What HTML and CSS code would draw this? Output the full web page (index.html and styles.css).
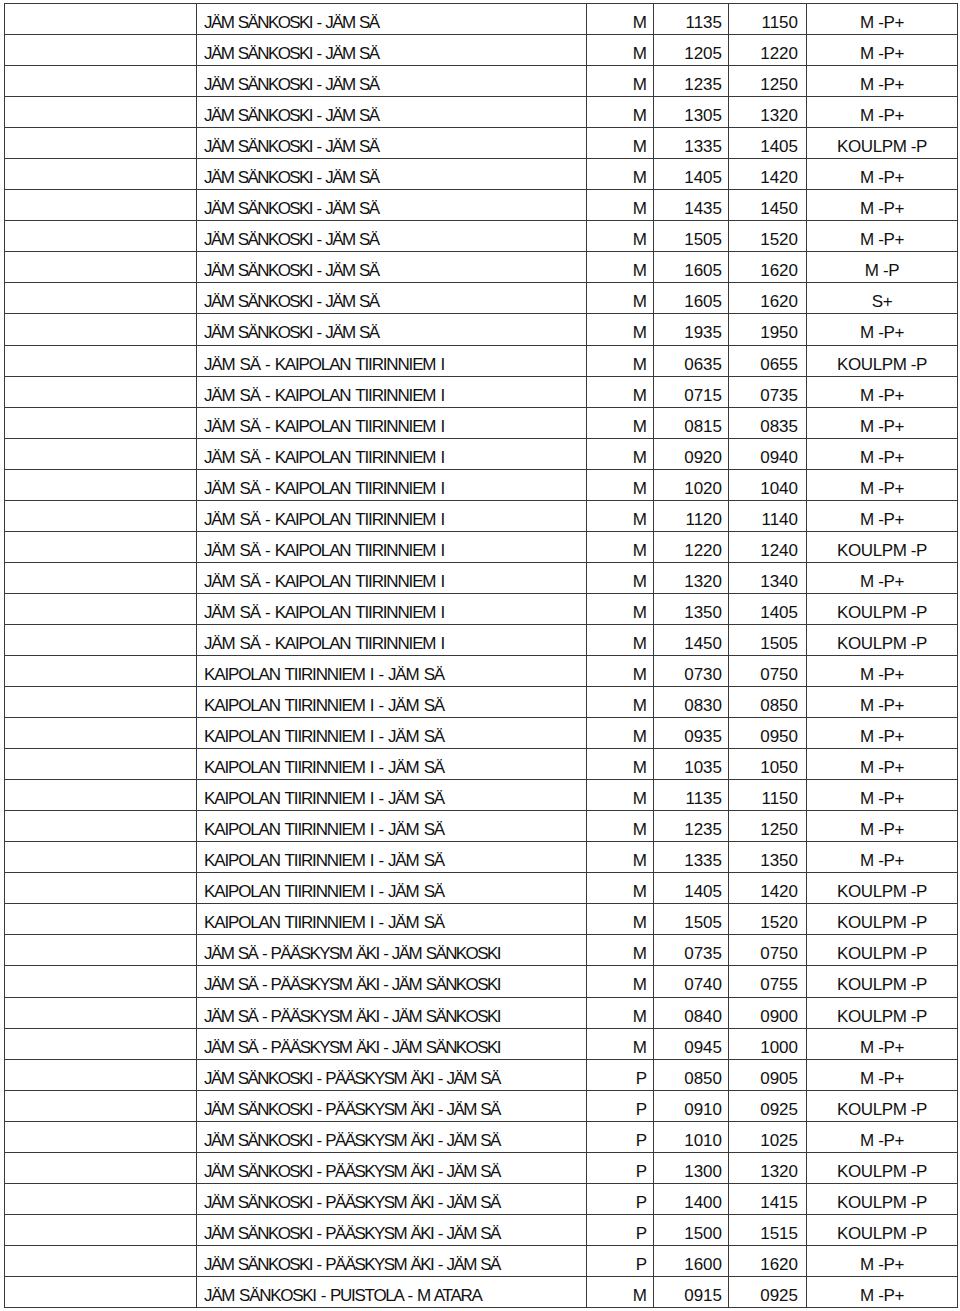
FILE: index.html
```html
<!DOCTYPE html>
<html lang="fi">
<head>
<meta charset="utf-8">
<title>Aikataulu</title>
<link rel="stylesheet" href="styles.css">
</head>
<body>
<table class="timetable">
<colgroup>
<col class="c-blank"><col class="c-route"><col class="c-day"><col class="c-dep"><col class="c-arr"><col class="c-type">
</colgroup>
<tbody>
<tr><td></td><td class="route">JÄM SÄNKOSKI - JÄM SÄ</td><td class="day">M</td><td class="dep">1135</td><td class="arr">1150</td><td class="type">M -P+</td></tr>
<tr><td></td><td class="route">JÄM SÄNKOSKI - JÄM SÄ</td><td class="day">M</td><td class="dep">1205</td><td class="arr">1220</td><td class="type">M -P+</td></tr>
<tr><td></td><td class="route">JÄM SÄNKOSKI - JÄM SÄ</td><td class="day">M</td><td class="dep">1235</td><td class="arr">1250</td><td class="type">M -P+</td></tr>
<tr><td></td><td class="route">JÄM SÄNKOSKI - JÄM SÄ</td><td class="day">M</td><td class="dep">1305</td><td class="arr">1320</td><td class="type">M -P+</td></tr>
<tr><td></td><td class="route">JÄM SÄNKOSKI - JÄM SÄ</td><td class="day">M</td><td class="dep">1335</td><td class="arr">1405</td><td class="type">KOULPM -P</td></tr>
<tr><td></td><td class="route">JÄM SÄNKOSKI - JÄM SÄ</td><td class="day">M</td><td class="dep">1405</td><td class="arr">1420</td><td class="type">M -P+</td></tr>
<tr><td></td><td class="route">JÄM SÄNKOSKI - JÄM SÄ</td><td class="day">M</td><td class="dep">1435</td><td class="arr">1450</td><td class="type">M -P+</td></tr>
<tr><td></td><td class="route">JÄM SÄNKOSKI - JÄM SÄ</td><td class="day">M</td><td class="dep">1505</td><td class="arr">1520</td><td class="type">M -P+</td></tr>
<tr><td></td><td class="route">JÄM SÄNKOSKI - JÄM SÄ</td><td class="day">M</td><td class="dep">1605</td><td class="arr">1620</td><td class="type">M -P</td></tr>
<tr><td></td><td class="route">JÄM SÄNKOSKI - JÄM SÄ</td><td class="day">M</td><td class="dep">1605</td><td class="arr">1620</td><td class="type">S+</td></tr>
<tr><td></td><td class="route">JÄM SÄNKOSKI - JÄM SÄ</td><td class="day">M</td><td class="dep">1935</td><td class="arr">1950</td><td class="type">M -P+</td></tr>
<tr><td></td><td class="route r-kai">JÄM SÄ - KAIPOLAN TIIRINNIEM I</td><td class="day">M</td><td class="dep">0635</td><td class="arr">0655</td><td class="type">KOULPM -P</td></tr>
<tr><td></td><td class="route r-kai">JÄM SÄ - KAIPOLAN TIIRINNIEM I</td><td class="day">M</td><td class="dep">0715</td><td class="arr">0735</td><td class="type">M -P+</td></tr>
<tr><td></td><td class="route r-kai">JÄM SÄ - KAIPOLAN TIIRINNIEM I</td><td class="day">M</td><td class="dep">0815</td><td class="arr">0835</td><td class="type">M -P+</td></tr>
<tr><td></td><td class="route r-kai">JÄM SÄ - KAIPOLAN TIIRINNIEM I</td><td class="day">M</td><td class="dep">0920</td><td class="arr">0940</td><td class="type">M -P+</td></tr>
<tr><td></td><td class="route r-kai">JÄM SÄ - KAIPOLAN TIIRINNIEM I</td><td class="day">M</td><td class="dep">1020</td><td class="arr">1040</td><td class="type">M -P+</td></tr>
<tr><td></td><td class="route r-kai">JÄM SÄ - KAIPOLAN TIIRINNIEM I</td><td class="day">M</td><td class="dep">1120</td><td class="arr">1140</td><td class="type">M -P+</td></tr>
<tr><td></td><td class="route r-kai">JÄM SÄ - KAIPOLAN TIIRINNIEM I</td><td class="day">M</td><td class="dep">1220</td><td class="arr">1240</td><td class="type">KOULPM -P</td></tr>
<tr><td></td><td class="route r-kai">JÄM SÄ - KAIPOLAN TIIRINNIEM I</td><td class="day">M</td><td class="dep">1320</td><td class="arr">1340</td><td class="type">M -P+</td></tr>
<tr><td></td><td class="route r-kai">JÄM SÄ - KAIPOLAN TIIRINNIEM I</td><td class="day">M</td><td class="dep">1350</td><td class="arr">1405</td><td class="type">KOULPM -P</td></tr>
<tr><td></td><td class="route r-kai">JÄM SÄ - KAIPOLAN TIIRINNIEM I</td><td class="day">M</td><td class="dep">1450</td><td class="arr">1505</td><td class="type">KOULPM -P</td></tr>
<tr><td></td><td class="route r-kai">KAIPOLAN TIIRINNIEM I - JÄM SÄ</td><td class="day">M</td><td class="dep">0730</td><td class="arr">0750</td><td class="type">M -P+</td></tr>
<tr><td></td><td class="route r-kai">KAIPOLAN TIIRINNIEM I - JÄM SÄ</td><td class="day">M</td><td class="dep">0830</td><td class="arr">0850</td><td class="type">M -P+</td></tr>
<tr><td></td><td class="route r-kai">KAIPOLAN TIIRINNIEM I - JÄM SÄ</td><td class="day">M</td><td class="dep">0935</td><td class="arr">0950</td><td class="type">M -P+</td></tr>
<tr><td></td><td class="route r-kai">KAIPOLAN TIIRINNIEM I - JÄM SÄ</td><td class="day">M</td><td class="dep">1035</td><td class="arr">1050</td><td class="type">M -P+</td></tr>
<tr><td></td><td class="route r-kai">KAIPOLAN TIIRINNIEM I - JÄM SÄ</td><td class="day">M</td><td class="dep">1135</td><td class="arr">1150</td><td class="type">M -P+</td></tr>
<tr><td></td><td class="route r-kai">KAIPOLAN TIIRINNIEM I - JÄM SÄ</td><td class="day">M</td><td class="dep">1235</td><td class="arr">1250</td><td class="type">M -P+</td></tr>
<tr><td></td><td class="route r-kai">KAIPOLAN TIIRINNIEM I - JÄM SÄ</td><td class="day">M</td><td class="dep">1335</td><td class="arr">1350</td><td class="type">M -P+</td></tr>
<tr><td></td><td class="route r-kai">KAIPOLAN TIIRINNIEM I - JÄM SÄ</td><td class="day">M</td><td class="dep">1405</td><td class="arr">1420</td><td class="type">KOULPM -P</td></tr>
<tr><td></td><td class="route r-kai">KAIPOLAN TIIRINNIEM I - JÄM SÄ</td><td class="day">M</td><td class="dep">1505</td><td class="arr">1520</td><td class="type">KOULPM -P</td></tr>
<tr><td></td><td class="route">JÄM SÄ - PÄÄSKYSM ÄKI - JÄM SÄNKOSKI</td><td class="day">M</td><td class="dep">0735</td><td class="arr">0750</td><td class="type">KOULPM -P</td></tr>
<tr><td></td><td class="route">JÄM SÄ - PÄÄSKYSM ÄKI - JÄM SÄNKOSKI</td><td class="day">M</td><td class="dep">0740</td><td class="arr">0755</td><td class="type">KOULPM -P</td></tr>
<tr><td></td><td class="route">JÄM SÄ - PÄÄSKYSM ÄKI - JÄM SÄNKOSKI</td><td class="day">M</td><td class="dep">0840</td><td class="arr">0900</td><td class="type">KOULPM -P</td></tr>
<tr><td></td><td class="route">JÄM SÄ - PÄÄSKYSM ÄKI - JÄM SÄNKOSKI</td><td class="day">M</td><td class="dep">0945</td><td class="arr">1000</td><td class="type">M -P+</td></tr>
<tr><td></td><td class="route">JÄM SÄNKOSKI - PÄÄSKYSM ÄKI - JÄM SÄ</td><td class="day">P</td><td class="dep">0850</td><td class="arr">0905</td><td class="type">M -P+</td></tr>
<tr><td></td><td class="route">JÄM SÄNKOSKI - PÄÄSKYSM ÄKI - JÄM SÄ</td><td class="day">P</td><td class="dep">0910</td><td class="arr">0925</td><td class="type">KOULPM -P</td></tr>
<tr><td></td><td class="route">JÄM SÄNKOSKI - PÄÄSKYSM ÄKI - JÄM SÄ</td><td class="day">P</td><td class="dep">1010</td><td class="arr">1025</td><td class="type">M -P+</td></tr>
<tr><td></td><td class="route">JÄM SÄNKOSKI - PÄÄSKYSM ÄKI - JÄM SÄ</td><td class="day">P</td><td class="dep">1300</td><td class="arr">1320</td><td class="type">KOULPM -P</td></tr>
<tr><td></td><td class="route">JÄM SÄNKOSKI - PÄÄSKYSM ÄKI - JÄM SÄ</td><td class="day">P</td><td class="dep">1400</td><td class="arr">1415</td><td class="type">KOULPM -P</td></tr>
<tr><td></td><td class="route">JÄM SÄNKOSKI - PÄÄSKYSM ÄKI - JÄM SÄ</td><td class="day">P</td><td class="dep">1500</td><td class="arr">1515</td><td class="type">KOULPM -P</td></tr>
<tr><td></td><td class="route">JÄM SÄNKOSKI - PÄÄSKYSM ÄKI - JÄM SÄ</td><td class="day">P</td><td class="dep">1600</td><td class="arr">1620</td><td class="type">M -P+</td></tr>
<tr><td></td><td class="route r-pui">JÄM SÄNKOSKI - PUISTOLA - M ATARA</td><td class="day">M</td><td class="dep">0915</td><td class="arr">0925</td><td class="type">M -P+</td></tr>
</tbody>
</table>
</body>
</html>
```

FILE: styles.css
```css
html, body {
  margin: 0;
  padding: 0;
  background: #ffffff;
}

body {
  padding: 3px 0 0 4px;
  font-family: "Liberation Sans", Arial, sans-serif;
  font-size: 17px;
  color: #111111;
}

.timetable {
  border-collapse: collapse;
  table-layout: fixed;
  width: 953px;
  border: 1px solid #3a3a3a;
}

.c-blank { width: 192px; }
.c-route { width: 390px; }
.c-day { width: 67px; }
.c-dep { width: 75px; }
.c-arr { width: 78px; }
.c-type { width: 151px; }

.timetable td {
  border: 1px solid #3a3a3a;
  height: 31.05px;
  box-sizing: border-box;
  padding: 10px 0 0 0;
  vertical-align: top;
  line-height: 17px;
  white-space: nowrap;
  overflow: hidden;
}

.timetable td.route {
  padding-left: 7px;
  letter-spacing: -1.6px;
  word-spacing: 1.5px;
}

.timetable td.route.r-kai {
  letter-spacing: -1.15px;
}

.timetable td.route.r-pui {
  letter-spacing: -1.28px;
}

.timetable td.day {
  text-align: right;
  padding-right: 6px;
}

.timetable td.dep {
  text-align: right;
  padding-right: 6px;
}

.timetable td.arr {
  text-align: right;
  padding-right: 8px;
}

.timetable td.type {
  text-align: center;
  letter-spacing: -0.4px;
}
```
